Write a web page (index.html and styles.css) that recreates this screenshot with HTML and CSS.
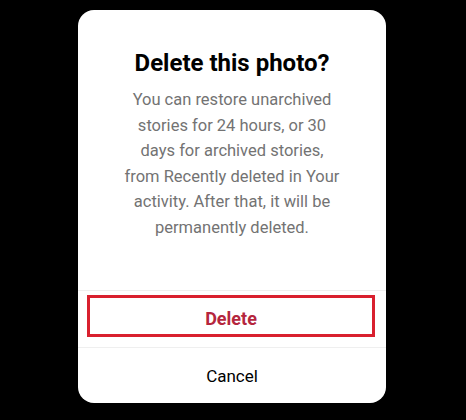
FILE: index.html
```html
<!DOCTYPE html>
<html>
<head>
<meta charset="utf-8">
<link rel="stylesheet" href="styles.css">
</head>
<body>
<div class="dialog">
  <div class="content">
    <h1 class="title">Delete this photo?</h1>
    <p class="message">You can restore unarchived stories for 24 hours, or 30 days for archived stories, from Recently deleted in Your activity. After that, it will be permanently deleted.</p>
  </div>
  <div class="actions">
    <div class="row row-delete">
      <div class="highlight"><span class="btn-delete">Delete</span></div>
    </div>
    <div class="row row-cancel"><span class="btn-cancel">Cancel</span></div>
  </div>
</div>
</body>
</html>
```
FILE: styles.css
```css
html, body {
  margin: 0;
  padding: 0;
  background: #000;
  width: 466px;
  height: 420px;
  overflow: hidden;
}
body {
  font-family: Roboto, "Liberation Sans", sans-serif;
  padding-top: 10px;
  padding-left: 78px;
  box-sizing: border-box;
}
.dialog {
  width: 308px;
  height: 393px;
  background: #fff;
  border-radius: 16px;
  display: flex;
  flex-direction: column;
  overflow: hidden;
}
.content {
  flex: 1;
  padding: 39px 0 0;
  display: flex;
  flex-direction: column;
  align-items: center;
  text-align: center;
}
.title {
  margin: 0;
  font-size: 24px;
  line-height: 28px;
  font-weight: 700;
  color: #000;
}
.message {
  width: 221px;
  margin: 10px 0 0;
  font-size: 16.5px;
  line-height: 25.5px;
  color: #737373;
}
.actions {
  display: flex;
  flex-direction: column;
}
.row {
  border-top: 1px solid #efefef;
  display: flex;
  justify-content: center;
  align-items: center;
}
.row-delete {
  height: 57px;
  padding: 4px 11px 10px 9px;
  box-sizing: border-box;
  align-items: stretch;
}
.highlight {
  flex: 1;
  border: 3px solid #d9202e;
  display: flex;
  justify-content: center;
  align-items: center;
  padding-top: 5px;
}
.btn-delete {
  font-size: 18px;
  font-weight: 700;
  color: #b5263d;
}
.row-cancel {
  height: 55px;
}
.btn-cancel {
  font-size: 17px;
  color: #000;
}
```
